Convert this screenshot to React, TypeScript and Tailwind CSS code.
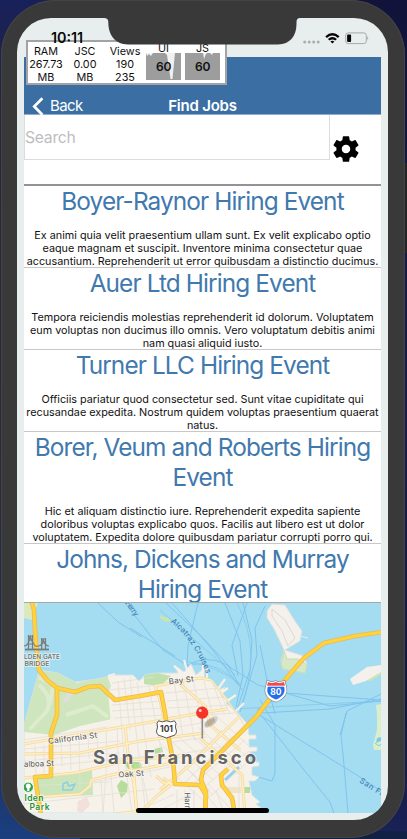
import React from "react";

type HiringEvent = {
  title: string[];
  body: string[];
};

const events: HiringEvent[] = [
  {
    title: ["Boyer-Raynor Hiring Event"],
    body: [
      "Ex animi quia velit praesentium ullam sunt. Ex velit explicabo optio",
      "eaque magnam et suscipit. Inventore minima consectetur quae",
      "accusantium. Reprehenderit ut error quibusdam a distinctio ducimus.",
    ],
  },
  {
    title: ["Auer Ltd Hiring Event"],
    body: [
      "Tempora reiciendis molestias reprehenderit id dolorum. Voluptatem",
      "eum voluptas non ducimus illo omnis. Vero voluptatum debitis animi",
      "nam quasi aliquid iusto.",
    ],
  },
  {
    title: ["Turner LLC Hiring Event"],
    body: [
      "Officiis pariatur quod consectetur sed. Sunt vitae cupiditate qui",
      "recusandae expedita. Nostrum quidem voluptas praesentium quaerat",
      "natus.",
    ],
  },
  {
    title: ["Borer, Veum and Roberts Hiring", "Event"],
    body: [
      "Hic et aliquam distinctio iure. Reprehenderit expedita sapiente",
      "doloribus voluptas explicabo quos. Facilis aut libero est ut dolor",
      "voluptatem. Expedita dolore quibusdam pariatur corrupti porro qui.",
    ],
  },
  {
    title: ["Johns, Dickens and Murray", "Hiring Event"],
    body: [],
  },
];

function EventRow({ event }: { event: HiringEvent }) {
  return (
    <div className="flex shrink-0 flex-col items-center border-b border-[#c8c8cb] text-center">
      {event.title.map((line) => (
        <div key={line} className="h-[30px] text-[24.4px] leading-[30px] tracking-[-0.9px] whitespace-nowrap text-[#4179ae]">
          {line}
        </div>
      ))}
      <div className="mt-[13px] -mb-px flex flex-col items-center">
        {event.body.map((line) => (
          <div key={line} className="h-[13px] text-[10.8px] leading-[13px] whitespace-nowrap text-[#111]">
            {line}
          </div>
        ))}
      </div>
    </div>
  );
}

function Stat({ lines, width }: { lines: string[]; width: string }) {
  return (
    <div className={`flex shrink-0 flex-col items-center whitespace-nowrap ${width}`}>
      {lines.map((line) => (
        <span key={line}>{line}</span>
      ))}
    </div>
  );
}

function FpsGraph({ label, dips }: { label: string; dips: string }) {
  return (
    <div className="flex w-[39px] shrink-0 flex-col items-center">
      <span className="h-[11px] leading-[7px]">{label}</span>
      <svg width="35" height="27" viewBox="0 0 35 27" className="-mt-[3px]">
        <rect width="36" height="27" fill="#9d9d9d" />
        <path d={dips} fill="#f1f1f1" />
        <text x="17.700" y="17.800" textAnchor="middle" fontSize="12" fontWeight="600" fill="#111">60</text>
      </svg>
    </div>
  );
}

function PerfMonitor() {
  return (
    <div className="absolute top-[22px] left-[9px] flex h-[45px] w-[201px] overflow-hidden border-2 border-[#a3a3a3] bg-white pt-[3px] text-[10.8px] leading-[13px] text-[#111]">
      <Stat width="w-[36px]" lines={["RAM", "267.73", "MB"]} />
      <Stat width="w-[42px]" lines={["JSC", "0.00", "MB"]} />
      <Stat width="w-[38px]" lines={["Views", "190", "235"]} />
      <FpsGraph label="UI" dips="M0 0L1 3L3 1L5 3L7 0ZM19 0L21 2L23 15L24.5 26L26.5 26L28 10L29 0Z" />
      <FpsGraph label="JS" dips="M18 0L19 6L20.5 2L22 0ZM25 0L27 2L28 0Z" />
    </div>
  );
}

function StatusIcons() {
  return (
    <svg className="absolute top-3 left-[284px]" width="72" height="16" viewBox="301 30 72 16">
      <g fill="#a9adad">
        <circle cx="304.7" cy="42" r="1.5" /><circle cx="309.2" cy="42" r="1.5" /><circle cx="313.7" cy="42" r="1.5" /><circle cx="318.2" cy="42" r="1.5" />
      </g>
      <path d="M325.3 36.2Q332.4 29.8 339.5 36.2L337.9 37.9Q332.4 33 326.9 37.9ZM327.9 38.9Q332.4 34.9 336.9 38.9L335.2 40.6Q332.4 38.2 329.6 40.6ZM330.4 41.5Q332.4 39.9 334.4 41.5L332.4 43.6Z" fill="#050505" />
      <rect x="345.7" y="32.9" width="20.6" height="10.7" rx="2.5" fill="none" stroke="#a4a8a8" />
      <rect x="347.1" y="34.4" width="4" height="7.7" rx="1" fill="#080808" />
      <path d="M367.2 36.6Q369.4 38.2 367.2 39.8Z" fill="#a4a8a8" />
    </svg>
  );
}

function GearIcon() {
  return (
    <svg width="32" height="32" viewBox="0 0 24 24" fill="#000">
      <path d="M19.14 12.94c.04-.3.06-.61.06-.94 0-.32-.02-.64-.07-.94l2.03-1.58c.18-.14.23-.41.12-.61l-1.92-3.32c-.12-.22-.37-.29-.59-.22l-2.39.96c-.5-.38-1.03-.7-1.62-.94l-.36-2.54c-.04-.24-.24-.41-.48-.41h-3.84c-.24 0-.43.17-.47.41l-.36 2.54c-.59.24-1.13.57-1.62.94l-2.39-.96c-.22-.08-.47 0-.59.22L2.74 8.87c-.12.21-.08.47.12.61l2.03 1.58c-.05.3-.09.63-.09.94s.02.64.07.94l-2.03 1.58c-.18.14-.23.41-.12.61l1.92 3.32c.12.22.37.29.59.22l2.39-.96c.5.38 1.03.7 1.62.94l.36 2.54c.05.24.24.41.48.41h3.84c.24 0 .44-.17.47-.41l.36-2.54c.59-.24 1.13-.56 1.62-.94l2.39.96c.22.08.47 0 .59-.22l1.92-3.32c.12-.22.07-.47-.12-.61l-2.01-1.58zM12 15.2c-1.77 0-3.2-1.43-3.2-3.2s1.43-3.2 3.2-3.2 3.2 1.43 3.2 3.2-1.43 3.2-3.2 3.2z" />
    </svg>
  );
}

const motorways = [
  "M31 600L34 610L35 630L37 653L39 670L47 680L57 688L75 692L88 687L100 686L115 700L140 696L161 692L165 713L169 740L173 760L175 784L200 785L206 795L205 815",
  "M57 688L57 715L51 733L51 776L35 777L37 790L41 815",
  "M383 632L355 636L324 643L304 658L290 674L275 692L256 717L235 738L203 770L201 780L206 792L205 815",
  "M228 769L221 775L222 785L232 798L235 815",
];

const cityStreets = [
  "M24 744L110 729L140 724L195 714L227 709",
  "M24 754L80 753L140 741L205 733",
  "M24 778L75 773L130 760L180 756",
  "M40 797L80 794L90 786L91 780L115 774L173 763",
  "M125 725L128 754L134 785L137 815",
  "M155 686L200 678L212 680L240 716L248 730",
  "M155 686L160 700L172 756",
  "M180 684L205 706L210 725L240 750",
  "M163 778L172 784L158 795L142 811L115 814",
  "M134 775L137 815",
  "M240 716L190 765L160 790",
  "M156 776L164 783L200 786",
  "M200 738L242 775L245 815",
];

function CityMap() {
  return (
    <svg className="block shrink-0" width="357" height="210" viewBox="24 603 357 210">
      <defs>
        <clipPath id="city">
          <path d="M24 725L36 682L39 670L58 673L75 682L97 679L115 675L133 675L139 681L145 675L155 673L178 673L176 665L185 672L191 664L199 673L212 680L225 696L241 719L249 735L250 776L255 815L24 815Z" />
        </clipPath>
      </defs>
      <rect x="24" y="603" width="357" height="210" fill="#a4dcf1" />

      <g fill="none" stroke="#7fc4ee" strokeWidth="1">
        <path d="M125 603L150 635L163 650L190 667M130 628L175 656M98 603L118 622L142 637M172 603L200 635L215 653L238 685M166 603L205 640L228 665L242 690M198 603L188 645L187 667M187 666Q205 654 225 664L258 685L330 706L381 701M260 645L270 695L275 714M225 603L240 641L243 675L236 707M243 603L252 640L250 670L237 710M265 606L255 628L257 655L240 712M247 603L232 645L238 676M257 710L285 693L381 700M262 713L330 709L381 699M258 714L300 740L360 777L381 791M262 716L300 765L330 802L334 813M346 713L341 735L344 765L348 813M381 694L347 711L340 735M260 700L275 725L275 773L272 781L258 777" />
        <path d="M185 666Q210 659 232 677M188 662Q213 664 242 685M237 603Q262 650 242 704M160 610L235 675M234 709L381 701" strokeOpacity=".7" />
      </g>

      <path d="M24 603L38 603L32 620L24 618Z" fill="#dce9bd" />
      <path d="M159 615L168 618L171 621L166 622L160 618Z" fill="#c9e6a9" />
      <path d="M267 611L272 604L285 605L295 621L302 631L300 641L285 650L304 656L307 665L305 673L283 669L281 661L284 650L274 629L267 618Z" fill="#f4f0eb" stroke="#d7e0e1" />
      <path d="M272 609L285 620L295 638L288 646L282 631L272 616Z" fill="none" stroke="#ddd8d2" />
      <path d="M284 651L287 659L298 659L307 665L305 673L283 669L281 664Z" fill="#d5e8c7" stroke="#ccdcb2" />
      <path d="M300 636L308 638" stroke="#e8edec" />
      <path d="M350 679L367 667L381 665L381 674L366 681L353 685Z" fill="#f4f0eb" />
      <path d="M366 681L381 672L381 675L370 681Z" fill="#cae5b2" />
      <path d="M376 705L381 704L381 750L374 750L373 745L377 730L377 715Z" fill="#dceec9" />
      <path d="M377 738L381 737V741L376 743Z" fill="#7dcbe6" />
      <path d="M375 743L379 746L381 744" fill="none" stroke="#7dcbe6" />

      <path d="M24 725L36 682L39 670L58 673L75 682L97 679L115 675L133 675L139 681L145 675L155 673L178 673L174 665L184 672L191 664L196 675L204 668L204 677L213 681L219 690L225 687L222 696L230 700L226 703L236 711L248 725L249 735L256 735V739H249V747L257 747V751L250 752V762L259 762V766L252 767V775L259 777L255 781L249 781L252 795L260 802L256 804L261 808L255 813L24 813Z" fill="#f6f1e9" stroke="#d4e4e4" />
      <path d="M203 680V665M207 679V667M218 689L225 679M221 693L228 688M227 701L236 695M236 711L244 703M174 666L185 675M187 670L184 660M108 676L115 674" stroke="#f6f1e9" strokeWidth="2.2" />
      <g clipPath="url(#city)">
        <path d="M24 720L39 671L57 672L77 683L107 675L111 686L108 693L112 719L80 726L54 735L24 732Z" fill="#cfe5bd" />
        <path d="M39 685Q53 697 47 711L30 729M66 715L93 706L108 717M39 677L53 685L50 705" fill="none" stroke="#dceccc" strokeWidth="4" />
        <path d="M108 691L140 688V722L111 725Z" fill="#f6f1e9" />
        <path d="M144 675L157 673L171 676L166 681L159 686L144 684Z" fill="#bfe1ad" />
        <path d="M52 776L92 770L93 795L58 797L38 794L35 778Z" fill="#cbe5bb" />
        <path d="M124 762L139 762L140 768L128 769Z" fill="#a9d891" />
        <path d="M154 749L162 747L163 752L155 754ZM134 764L141 763L142 768L134 769ZM117 786L121 780L128 784L127 792L121 798ZM243 787H250V793H243Z" fill="#b6dd9e" />
        <path d="M78 801L87 797L90 805L82 813L77 811Z" fill="#f1dfd9" />
        <path d="M68 692L73 694L67 703L63 701Z" fill="#dedfdc" />
        <path d="M226 787H241V793H227Z" fill="#efe4ca" />
        <path d="M225 780L239 767" stroke="#92d2eb" strokeWidth="3" />

        <g fill="none" stroke="#e3dfd8" strokeWidth=".8">
          <path d="M24 740L107 727M24 749L120 741M24 761L120 753M24 768L160 755M24 786L110 782M24 804L155 789M94 782L170 767M112 683L154 677M108 690L160 685M112 705L162 701M112 711L163 708M114 718L165 715M118 681L124 755L132 813M124 679L130 730M130 677L137 740L146 813M137 682L143 725L151 777M149 686L162 755M117 727L119 775M106 729L107 759L103 813M97 731L98 758M88 733L89 759M79 735L80 790M70 738L71 770M61 740L62 767M35 745L36 777M44 745V776M101 780L103 813M111 776L114 813M143 778L150 813" />
          <path d="M174 681L183 737M183 680L195 741M193 679L203 730M204 681L215 724M213 684L224 713M220 693L230 714M165 693L219 688M167 701L226 697M168 708L232 705M170 717L235 713M171 728L213 721M173 742L207 737M175 755L220 747M160 743L210 790M170 740L213 780M178 736L222 777M189 733L230 770M198 727L242 766M207 722L247 757M214 714L248 745M174 779L222 730M182 785L233 736M192 785L245 740M200 790L249 751M205 801L250 760M174 775L203 800M184 766L213 795M208 784L230 808M155 813L195 792M148 806L175 794M177 790V813M185 790V813M194 790V813M209 798L221 813M216 790L224 813M239 776V813" />
        </g>
        <g fill="none" stroke="#f2d8a8" strokeWidth="3">
          {cityStreets.map((d) => <path key={d} d={d} />)}
        </g>
        <g fill="none" stroke="#fff0bd" strokeWidth="1.5">
          {cityStreets.map((d) => <path key={d} d={d} />)}
        </g>
        <path d="M63 784L67 782L69 786L75 784L72 790L63 790Z" fill="none" stroke="#8fcde2" strokeWidth="1.5" />
      </g>

      <g fill="none" strokeLinejoin="round">
        <g stroke="#eeb65d" strokeWidth="4.6">
          {motorways.map((d) => <path key={d} d={d} />)}
        </g>
        <g stroke="#ffd438" strokeWidth="3">
          {motorways.map((d) => <path key={d} d={d} />)}
        </g>
      </g>

      <g fill="none" stroke="#7c7b77" strokeWidth="1.2">
        <path d="M24 646Q29 646 30 636Q34 648 38 646Q43 646 43 639Q45 646 49 646" />
        <path d="M25 649.5H49" strokeWidth="1.8" />
        <path d="M28.5 635V650M32.5 635V650M28 636H33M28 640H33M28 644H33M41.7 638V650M45.5 638V650M41 639H46M41 643H46" />
      </g>

      <g fontFamily="Inter, sans-serif" stroke="#fff" strokeOpacity=".65" strokeWidth="1.6" paintOrder="stroke" strokeLinejoin="round">
        <g fontSize="6.5" fontWeight="600" fill="#777873">
          <text x="24" y="658.7" textLength="36" lengthAdjust="spacingAndGlyphs">LDEN GATE</text>
          <text x="24.5" y="665.8" textLength="25" lengthAdjust="spacingAndGlyphs">BRIDGE</text>
        </g>
        <g fontSize="8" fontWeight="500" fill="#696864">
          <text x="169" y="684.2" textLength="25" transform="rotate(-6 169 684)">Bay St</text>
          <text x="48.5" y="744" textLength="49.5" transform="rotate(-7.5 49 744)">California St</text>
          <text x="24" y="767" textLength="30" transform="rotate(-2 24 767)">alboa St</text>
          <text x="118.5" y="777.5" textLength="25.5" transform="rotate(-4 118 777)">Oak St</text>
          <text x="184.5" y="793.5" textLength="16" transform="rotate(88 185 793)">Harr</text>
        </g>
        <text x="93" y="764.2" fontSize="18.5" fontWeight="700" fill="#666563" textLength="163">San Francisco</text>
        <g fontSize="8.5" fontWeight="600" fill="#279136">
          <text x="24.5" y="801" textLength="19">lden</text>
          <text x="29.5" y="810.2" textLength="20">Park</text>
        </g>
      </g>
      <g fontFamily="Inter, sans-serif" fontSize="7.7" fontWeight="500" fill="#3e83b6">
        <path id="cruise-line" d="M170.500 622Q195 641 207.500 677" fill="none" />
        <text textLength="64"><textPath href="#cruise-line">Alcatraz Cruises</textPath></text>
        <text x="125" y="603" textLength="17" transform="rotate(54 125 603)">Ferry</text>
        <text x="359" y="782" textLength="42" transform="rotate(32 359 782)">San Franc</text>
      </g>

      <g>
        <circle cx="28.3" cy="787.2" r="5.2" fill="#36a745" stroke="#fff" strokeWidth="1" />
        <path d="M28.3 783.4a2.7 2.7 0 0 1 1.1 5.1V791H27.2V788.5a2.7 2.7 0 0 1 1.1-5.1" fill="#fff" />
      </g>

      <g fontFamily="Inter, sans-serif" fontSize="8.5" fontWeight="700" textAnchor="middle">
        <path d="M158.5 720.8Q162 723 166.5 720.8Q171 723 174.5 720.8L176 723.5Q174.5 727 176.5 731Q176.5 735.3 172 736L166.5 738L161 736Q156.5 735.3 156.5 731Q158.5 727 157 723.5Z" fill="#fff" stroke="#55585a" strokeWidth="1" />
        <text x="166.5" y="732.4" fill="#39393a">101</text>
        <path d="M268 682Q272 684 275.8 682Q279 684 284 682L285 686Q288 696 275.8 700.8Q263.5 696 267 686Z" fill="#246ee9" stroke="#737c90" strokeWidth="3.2" />
        <path d="M268 682Q272 684 275.8 682Q279 684 284 682L285 686Q288 696 275.8 700.8Q263.5 696 267 686Z" fill="#246ee9" stroke="#fff" strokeWidth="2" />
        <path d="M268 682Q272 684 275.8 682Q279 684 284 682L285 686H267Z" fill="#f04a4e" />
        <path d="M266.3 686.2H285.5" stroke="#fff" strokeWidth="1" />
        <text x="275.8" y="695" fill="#fff" fontSize="8.5">80</text>
      </g>

      <ellipse cx="211" cy="722" rx="8" ry="3.8" transform="rotate(-38 211 722)" fill="#5d5144" fillOpacity=".2" />
      <ellipse cx="210.500" cy="722.500" rx="6" ry="2.8" transform="rotate(-34 210 723)" fill="#4f473e" fillOpacity=".22" />
      <path d="M202.3 718V738.5" stroke="#8c8c8c" strokeWidth="1.6" />
      <circle cx="202.2" cy="712.7" r="6.1" fill="#f5332a" />
      <circle cx="200.2" cy="710.4" r="1.5" fill="#ffd3cf" />
    </svg>
  );
}

export default function App() {
  return (
    <div className="relative h-[839px] w-[407px] overflow-hidden bg-[linear-gradient(180deg,#18205a_0%,#23263f_12%,#282b3d_55%,#1f2c55_85%,#1b3f7f_100%)] font-['Inter','Liberation_Sans',sans-serif]">
      <div className="absolute top-0 right-0 h-full w-20 bg-[linear-gradient(180deg,#11133a_0%,#161b4c_50%,#11183e_85%,#1a2258_100%)]" />
      <div className="absolute right-0 bottom-0 left-20 h-2 bg-[#102145]" />
      <div className="absolute top-[163px] right-0 h-[90px] w-[3px] bg-[#242424]" />

      <div className="relative ml-px h-[838px] w-[404px] rounded-[55px] bg-[#393939] pt-[18px] pl-4 shadow-[inset_0_0_1px_1px_#454548]">
        <div className="relative flex h-[802px] w-[371px] flex-col overflow-hidden rounded-[34px] bg-[#e8eeee] px-[7px] pt-[39px]">
          <header className="relative flex h-[58px] shrink-0 items-end justify-center border-b border-[#8faecb] bg-[#3b6fa3] text-white">
            <div className="absolute -bottom-px left-2 flex h-[18px] items-center gap-[6px]">
              <svg width="12" height="19" viewBox="0 0 12 19" className="shrink-0">
                <path d="M10.4 1.2L2.2 9.5L10.4 17.8" fill="none" stroke="#fff" strokeWidth="2.7" />
              </svg>
              <span className="text-[15px] leading-[18px] tracking-[-0.6px]">Back</span>
            </div>
            <h1 className="-mb-px text-[15px] leading-[18px] font-semibold tracking-[-0.22px]">Find Jobs</h1>
          </header>

          <div className="flex h-[71px] shrink-0 border-b-2 border-[#949294] bg-white">
            <div className="flex h-[45px] w-[306px] items-center border border-t-0 border-[#dcdcdc] pt-px text-[15.7px] tracking-[-0.25px] text-[#bdbdbf]">Search</div>
            <div className="mt-[18px] -ml-[0.5px]">
              <GearIcon />
            </div>
          </div>

          <main className="flex h-[416px] shrink-0 flex-col overflow-hidden bg-white">
            {events.map((event) => (
              <EventRow key={event.title[0]} event={event} />
            ))}
          </main>
          <div className="h-px shrink-0 bg-[#a5a7a8]" />
          <CityMap />

          <PerfMonitor />
          <div className="absolute top-[11px] left-[34px] text-[14.3px] leading-[18px] font-semibold text-[#080808]">10:11</div>
          <StatusIcons />
          <svg className="absolute top-0 left-[87px]" width="196" height="27" viewBox="104 18 196 27">
            <path d="M104 17V18Q108.300 18 108.300 22C108.300 35 115 44.400 128 44.400H278C290 44.400 296.500 36 296.500 24V22Q296.500 18 300 18V17Z" fill="#393939" />
          </svg>
          <div className="absolute bottom-[7.500px] left-[119px] h-[5px] w-[133px] rounded-full bg-black" />
        </div>
      </div>
    </div>
  );
}
